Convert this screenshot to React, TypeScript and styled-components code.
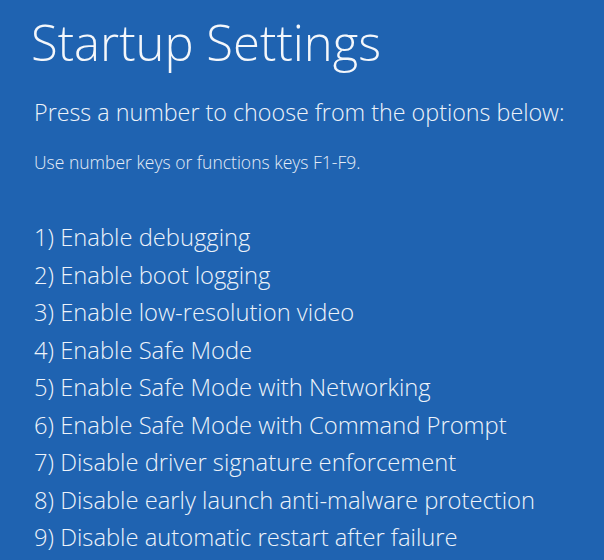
import React from 'react'
import styled, { createGlobalStyle } from 'styled-components'

const GlobalStyle = createGlobalStyle`
  html, body {
    margin: 0;
    padding: 0;
    background: #1f63b1;
  }
  body {
    font-family: 'Open Sans', 'Noto Sans', sans-serif;
    color: #ffffff;
  }
`

const Screen = styled.div`
  width: 604px;
  height: 560px;
  overflow: hidden;
  background: #1f63b1;
  padding: 12px 0 0 31px;
  box-sizing: border-box;
  display: flex;
  flex-direction: column;
`

const Title = styled.h1`
  margin: 0;
  font-size: 49px;
  font-weight: 300;
  line-height: 60px;
  color: #f4f7fb;
`

const Prompt = styled.p`
  margin: 25px 0 0 3px;
  font-size: 23.3px;
  font-weight: 300;
  line-height: 30px;
  color: #eef3fa;
`

const Hint = styled.p`
  margin: 24px 0 0 3px;
  font-size: 17.5px;
  font-weight: 300;
  line-height: 22px;
  color: #e4ecf7;
`

const OptionList = styled.ol`
  list-style: none;
  margin: 46px 0 0 3px;
  padding: 0;
  display: flex;
  flex-direction: column;
`

const Option = styled.li`
  font-size: 23.75px;
  font-weight: 300;
  line-height: 37.5px;
  color: #eef3fa;
`

const options = [
  'Enable debugging',
  'Enable boot logging',
  'Enable low-resolution video',
  'Enable Safe Mode',
  'Enable Safe Mode with Networking',
  'Enable Safe Mode with Command Prompt',
  'Disable driver signature enforcement',
  'Disable early launch anti-malware protection',
  'Disable automatic restart after failure',
]

const App: React.FC = () => {
  return (
    <>
      <GlobalStyle />
      <Screen>
        <Title>Startup Settings</Title>
        <Prompt>Press a number to choose from the options below:</Prompt>
        <Hint>Use number keys or functions keys F1-F9.</Hint>
        <OptionList>
          {options.map((o, i) => (
            <Option key={o}>
              {i + 1}) {o}
            </Option>
          ))}
        </OptionList>
      </Screen>
    </>
  )
}
export default App
